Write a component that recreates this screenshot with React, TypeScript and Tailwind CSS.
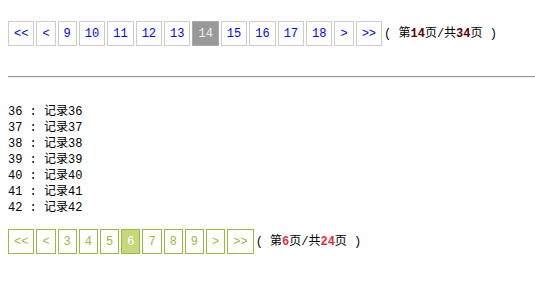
import React from "react";

type Theme = "gray" | "green";

const topPages = [9, 10, 11, 12, 13, 14, 15, 16, 17, 18];
const bottomPages = [3, 4, 5, 6, 7, 8, 9];
const records = [36, 37, 38, 39, 40, 41, 42];

const Box = ({ label, theme, current }: { label: string; theme: Theme; current?: boolean }) => {
  const cls =
    theme === "gray"
      ? current
        ? "bg-[#999999] border-[#aaaaaa] text-[#eeeeee]"
        : "bg-white border-[#cccccc] text-[#0000ff]"
      : current
      ? "bg-[#c5d87c] border-[#9aba3a] text-white"
      : "bg-white border-[#9aba3a] text-[#9aba3a]";
  return (
    <span className={`h-[25px] px-[5px] border flex items-center justify-center leading-none ${cls}`}>
      {label}
    </span>
  );
};

const Pager = ({
  pages,
  current,
  total,
  theme,
}: {
  pages: number[];
  current: number;
  total: number;
  theme: Theme;
}) => {
  const numColor = theme === "gray" ? "text-[#660000]" : "text-[#e0303c]";
  return (
    <div className="flex items-center gap-[2px]">
      <Box label="<<" theme={theme} />
      <Box label="<" theme={theme} />
      {pages.map((p) => (
        <Box key={p} label={String(p)} theme={theme} current={p === current} />
      ))}
      <Box label=">" theme={theme} />
      <Box label=">>" theme={theme} />
      <span className="whitespace-pre text-black text-[12px]">
        {"( 第"}
        <b className={numColor}>{current}</b>
        {"页/共"}
        <b className={numColor}>{total}</b>
        {"页 )"}
      </span>
    </div>
  );
};

export default function App() {
  return (
    <div
      className="w-[535px] h-[293px] bg-white pl-[8px] pt-[21px] text-[12px] overflow-hidden"
      style={{ fontFamily: '"Liberation Mono", "Noto Sans CJK SC", monospace' }}
    >
      <Pager pages={topPages} current={14} total={34} theme="gray" />

      {/* divider */}
      <div className="mt-[30px] border-t border-t-[#999999] border-b border-b-[#eeeeee]" />

      <div className="mt-[26px] flex flex-col">
        {records.map((r) => (
          <div key={r} className="h-[16px] leading-[16px] whitespace-pre text-black">
            {`${r} : 记录${r}`}
          </div>
        ))}
      </div>

      <div className="mt-[13px]">
        <Pager pages={bottomPages} current={6} total={24} theme="green" />
      </div>
    </div>
  );
}
